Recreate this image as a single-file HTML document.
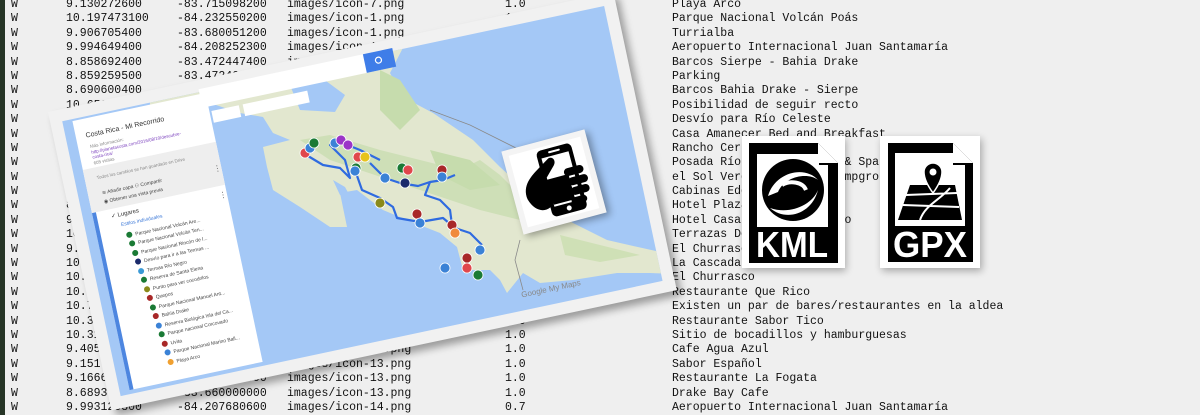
<!DOCTYPE html>
<html><head><meta charset="utf-8">
<style>
html,body{margin:0;padding:0;overflow:hidden;width:1200px;height:415px}
body{background:#efefef;position:relative;font-family:"Liberation Mono",monospace}
#strip{position:absolute;left:0;top:0;width:5px;height:415px;background:#263526}
#rows{position:absolute;left:0;top:-2px;width:1200px;font-size:11.5px;line-height:14.4px;color:#111}
.r{position:relative;height:14.4px}
.r span{position:absolute;top:0;white-space:pre}
svg{position:absolute;left:0;top:0}
</style></head><body>
<div id="strip"></div>
<div id="rows"><div class="r"><span style="left:11px">W</span><span style="left:66px">9.130272600</span><span style="left:177px">-83.715098200</span><span style="left:287px">images/icon-7.png</span><span style="left:505px">1.0</span><span style="left:672px">Playa Arco</span></div><div class="r"><span style="left:11px">W</span><span style="left:66px">10.197473100</span><span style="left:177px">-84.232550200</span><span style="left:287px">images/icon-1.png</span><span style="left:505px">1.0</span><span style="left:672px">Parque Nacional Volcán Poás</span></div><div class="r"><span style="left:11px">W</span><span style="left:66px">9.906705400</span><span style="left:177px">-83.680051200</span><span style="left:287px">images/icon-1.png</span><span style="left:505px">1.0</span><span style="left:672px">Turrialba</span></div><div class="r"><span style="left:11px">W</span><span style="left:66px">9.994649400</span><span style="left:177px">-84.208252300</span><span style="left:287px">images/icon-14.png</span><span style="left:505px">1.0</span><span style="left:672px">Aeropuerto Internacional Juan Santamaría</span></div><div class="r"><span style="left:11px">W</span><span style="left:66px">8.858692400</span><span style="left:177px">-83.472447400</span><span style="left:287px">images/icon-3.png</span><span style="left:505px">1.0</span><span style="left:672px">Barcos Sierpe - Bahia Drake</span></div><div class="r"><span style="left:11px">W</span><span style="left:66px">8.859259500</span><span style="left:177px">-83.472400000</span><span style="left:287px">images/icon-3.png</span><span style="left:505px">1.0</span><span style="left:672px">Parking</span></div><div class="r"><span style="left:11px">W</span><span style="left:66px">8.690600400</span><span style="left:177px">-83.650000000</span><span style="left:287px">images/icon-3.png</span><span style="left:505px">1.0</span><span style="left:672px">Barcos Bahia Drake - Sierpe</span></div><div class="r"><span style="left:11px">W</span><span style="left:66px">10.650000000</span><span style="left:177px">-85.400000000</span><span style="left:287px">images/icon-5.png</span><span style="left:505px">1.0</span><span style="left:672px">Posibilidad de seguir recto</span></div><div class="r"><span style="left:11px">W</span><span style="left:66px">10.700000000</span><span style="left:177px">-85.000000000</span><span style="left:287px">images/icon-5.png</span><span style="left:505px">1.0</span><span style="left:672px">Desvío para Río Celeste</span></div><div class="r"><span style="left:11px">W</span><span style="left:66px">10.600000000</span><span style="left:177px">-85.100000000</span><span style="left:287px">images/icon-9.png</span><span style="left:505px">1.0</span><span style="left:672px">Casa Amanecer Bed and Breakfast</span></div><div class="r"><span style="left:11px">W</span><span style="left:66px">10.760000000</span><span style="left:177px">-85.300000000</span><span style="left:287px">images/icon-9.png</span><span style="left:505px">1.0</span><span style="left:672px">Rancho Cerro Azul</span></div><div class="r"><span style="left:11px">W</span><span style="left:66px">10.680000000</span><span style="left:177px">-85.000000000</span><span style="left:287px">images/icon-9.png</span><span style="left:505px">1.0</span><span style="left:672px">Posada Río Celeste Hotel &amp; Spa</span></div><div class="r"><span style="left:11px">W</span><span style="left:66px">10.640000000</span><span style="left:177px">-85.100000000</span><span style="left:287px">images/icon-9.png</span><span style="left:505px">1.0</span><span style="left:672px">el Sol Verde Lodge and Campground</span></div><div class="r"><span style="left:11px">W</span><span style="left:66px">9.100000000</span><span style="left:177px">-83.600000000</span><span style="left:287px">images/icon-9.png</span><span style="left:505px">1.0</span><span style="left:672px">Cabinas Eddoes</span></div><div class="r"><span style="left:11px">W</span><span style="left:66px">8.800000000</span><span style="left:177px">-83.500000000</span><span style="left:287px">images/icon-9.png</span><span style="left:505px">1.0</span><span style="left:672px">Hotel Plaza</span></div><div class="r"><span style="left:11px">W</span><span style="left:66px">9.400000000</span><span style="left:177px">-83.600000000</span><span style="left:287px">images/icon-9.png</span><span style="left:505px">1.0</span><span style="left:672px">Hotel Casa Rural Corcovado</span></div><div class="r"><span style="left:11px">W</span><span style="left:66px">10.300000000</span><span style="left:177px">-84.800000000</span><span style="left:287px">images/icon-9.png</span><span style="left:505px">1.0</span><span style="left:672px">Terrazas De Dominical</span></div><div class="r"><span style="left:11px">W</span><span style="left:66px">9.900000000</span><span style="left:177px">-84.100000000</span><span style="left:287px">images/icon-13.png</span><span style="left:505px">1.0</span><span style="left:672px">El Churrasco Restaurante</span></div><div class="r"><span style="left:11px">W</span><span style="left:66px">10.100000000</span><span style="left:177px">-84.500000000</span><span style="left:287px">images/icon-13.png</span><span style="left:505px">1.0</span><span style="left:672px">La Cascada</span></div><div class="r"><span style="left:11px">W</span><span style="left:66px">10.100000000</span><span style="left:177px">-84.500000000</span><span style="left:287px">images/icon-13.png</span><span style="left:505px">1.0</span><span style="left:672px">El Churrasco</span></div><div class="r"><span style="left:11px">W</span><span style="left:66px">10.490000000</span><span style="left:177px">-84.700000000</span><span style="left:287px">images/icon-13.png</span><span style="left:505px">1.0</span><span style="left:672px">Restaurante Que Rico</span></div><div class="r"><span style="left:11px">W</span><span style="left:66px">10.720000000</span><span style="left:177px">-85.000000000</span><span style="left:287px">images/icon-13.png</span><span style="left:505px">1.0</span><span style="left:672px">Existen un par de bares/restaurantes en la aldea</span></div><div class="r"><span style="left:11px">W</span><span style="left:66px">10.315000000</span><span style="left:177px">-84.800000000</span><span style="left:287px">images/icon-13.png</span><span style="left:505px">1.0</span><span style="left:672px">Restaurante Sabor Tico</span></div><div class="r"><span style="left:11px">W</span><span style="left:66px">10.317000000</span><span style="left:177px">-84.800000000</span><span style="left:287px">images/icon-13.png</span><span style="left:505px">1.0</span><span style="left:672px">Sitio de bocadillos y hamburguesas</span></div><div class="r"><span style="left:11px">W</span><span style="left:66px">9.405250000</span><span style="left:177px">-84.100000000</span><span style="left:287px">images/icon-13.png</span><span style="left:505px">1.0</span><span style="left:672px">Cafe Agua Azul</span></div><div class="r"><span style="left:11px">W</span><span style="left:66px">9.151780000</span><span style="left:177px">-83.700000000</span><span style="left:287px">images/icon-13.png</span><span style="left:505px">1.0</span><span style="left:672px">Sabor Español</span></div><div class="r"><span style="left:11px">W</span><span style="left:66px">9.166619000</span><span style="left:177px">-83.700000000</span><span style="left:287px">images/icon-13.png</span><span style="left:505px">1.0</span><span style="left:672px">Restaurante La Fogata</span></div><div class="r"><span style="left:11px">W</span><span style="left:66px">8.689304000</span><span style="left:177px">-83.660000000</span><span style="left:287px">images/icon-13.png</span><span style="left:505px">1.0</span><span style="left:672px">Drake Bay Cafe</span></div><div class="r"><span style="left:11px">W</span><span style="left:66px">9.993125800</span><span style="left:177px">-84.207680600</span><span style="left:287px">images/icon-14.png</span><span style="left:505px">0.7</span><span style="left:672px">Aeropuerto Internacional Juan Santamaría</span></div></div>

<svg width="1200" height="415" viewBox="0 0 1200 415" font-family="Liberation Sans, sans-serif">
<defs>
<clipPath id="mapc"><rect transform="translate(48,112) rotate(-12)" x="12" y="12" width="554" height="281"/></clipPath>
<filter id="sh" x="-20%" y="-20%" width="140%" height="140%"><feGaussianBlur stdDeviation="4"/></filter>
</defs>
<g transform="translate(48,112) rotate(-12)">
<rect x="4" y="6" width="578" height="305" fill="#000" opacity="0.35" filter="url(#sh)"/>
<rect x="0" y="0" width="578" height="305" fill="#f1f1f1"/>
<rect x="12" y="12" width="554" height="281" fill="#a4c8f6"/>
</g>
<g clip-path="url(#mapc)">
<path d="M150,20 L420,20 L407,40 L390,73 L403,97 L433,113 L473,140 L500,167 L533,197 L573,223 L607,240 L660,252 L700,250 L700,275 L650,273 L617,273 L573,280 L540,283 L523,273 L507,293 L500,280 L490,270 L463,270 L457,247 L440,233 L407,220 L383,210 L357,190 L340,193 L347,227 L330,227 L300,207 L273,190 L267,167 L263,147 L290,140 L273,133 L263,117 L240,113 L210,103 L150,110 Z" fill="#e2e7cf"/>
<path d="M300,140 L330,135 L380,150 L420,160 L460,170 L480,160 L500,175 L520,195 L540,210 L520,220 L480,210 L450,200 L420,190 L390,180 L360,170 L330,160 Z" fill="#c9ddb0" opacity="0.8"/>
<path d="M380,70 L400,80 L420,110 L400,130 L380,110 Z" fill="#c6dcad"/>
<path d="M430,150 L470,160 L500,185 L470,190 L440,175 Z" fill="#c6dcad"/>
<path d="M560,235 L600,245 L640,255 L600,262 L565,255 Z" fill="#cfe0b6"/>
<path d="M290,85 L322,78 L345,95 L335,112 L300,110 Z" fill="#a4c8f6"/>
<path d="M333,180 L345,187 L352,200 L340,195 Z" fill="#a4c8f6"/>
<path d="M430,110 L470,125 L520,150" stroke="#8a8a8a" stroke-width="0.8" fill="none"/>
<path d="M520,240 L515,260 L523,290" stroke="#8a8a8a" stroke-width="0.8" fill="none"/>
<g fill="none" stroke="#2f6be0" stroke-width="2.2" stroke-linejoin="round">
<path d="M303,153 L323,165 L340,168 L350,178 L345,160 L330,145 L335,140 L360,150 L380,160"/>
<path d="M355,170 L362,190 L380,198 L393,207 L397,218 L420,222 L443,218 L455,228 L470,233 L482,245"/>
<path d="M370,163 L385,178 L400,183 L418,186 L430,182 L443,180 L455,175"/>
<path d="M430,182 L425,195 L440,200 L450,210 L452,225"/>
</g>
<g stroke="#fff" stroke-width="0.8">
<circle cx="305" cy="153" r="5" fill="#e0474c"/><circle cx="310" cy="148" r="5" fill="#3b82d6"/><circle cx="314" cy="143" r="5" fill="#1a7a35"/>
<circle cx="335" cy="143" r="5" fill="#3b82d6"/><circle cx="341" cy="140" r="5" fill="#9b35c7"/><circle cx="348" cy="145" r="5" fill="#9b35c7"/>
<circle cx="358" cy="157" r="5" fill="#e0474c"/><circle cx="365" cy="157" r="5" fill="#e6c31c"/><circle cx="356" cy="168" r="5" fill="#1a7a35"/><circle cx="355" cy="171" r="5" fill="#3b82d6"/>
<circle cx="385" cy="178" r="5" fill="#3b82d6"/><circle cx="402" cy="168" r="5" fill="#1a7a35"/><circle cx="408" cy="170" r="5" fill="#e0474c"/><circle cx="405" cy="183" r="5" fill="#1b2a6b"/>
<circle cx="442" cy="170" r="5" fill="#a82828"/><circle cx="442" cy="177" r="5" fill="#3b82d6"/><circle cx="380" cy="203" r="5" fill="#8a8a1a"/>
<circle cx="417" cy="214" r="5" fill="#a82828"/><circle cx="420" cy="223" r="5" fill="#3b82d6"/><circle cx="452" cy="225" r="5" fill="#a82828"/><circle cx="455" cy="233" r="5" fill="#f08a3c"/>
<circle cx="480" cy="250" r="5" fill="#3b82d6"/><circle cx="467" cy="258" r="5" fill="#a82828"/><circle cx="467" cy="268" r="5" fill="#e0474c"/><circle cx="445" cy="268" r="5" fill="#3b82d6"/><circle cx="478" cy="275" r="5" fill="#1a7a35"/>
</g>
</g>
<g transform="translate(48,112) rotate(-12)">
<rect x="152" y="9" width="190" height="19" fill="#fff"/>
<rect x="320" y="9" width="30" height="19" fill="#3f7de8"/>
<circle cx="334" cy="18" r="3" fill="none" stroke="#fff" stroke-width="1.2"/>
<rect x="160" y="33" width="28" height="12" fill="#fff"/>
<rect x="192" y="33" width="66" height="12" fill="#fff"/>
<text x="425" y="280" font-size="8" fill="#888">Google My Maps</text>
<rect x="22" y="14" width="136" height="275" fill="#fff"/>
<rect x="22" y="64" width="136" height="44" fill="#eeeeee"/>
<rect x="22" y="108" width="4" height="181" fill="#4d86e0"/>
<text x="32" y="33" font-size="7" fill="#333">Costa Rica - Mi Recorrido</text>
<text x="34" y="44" font-size="4.5" fill="#888">Más información:</text>
<text x="34" y="50" font-size="4.5" fill="#7a3fbd">http://planetacosta.com/2016/08/10/descubre-</text>
<text x="34" y="55" font-size="4.5" fill="#7a3fbd">costa-rica/</text>
<text x="34" y="61" font-size="4.5" fill="#888">605 visitas</text>
<text x="34" y="76" font-size="4.5" fill="#888">Todos los cambios se han guardado en Drive</text>
<text x="36" y="92" font-size="5" fill="#444">≋ Añadir capa   ⚇ Compartir</text>
<text x="36" y="101" font-size="5" fill="#444">◉ Obtener una vista previa</text>
<text x="150" y="93" font-size="8" fill="#666">⋮</text>
<text x="150" y="120" font-size="8" fill="#666">⋮</text>
<text x="40" y="117" font-size="6" fill="#333">✓ Lugares</text>
<text x="48" y="127" font-size="5" fill="#3b78d8">Estilos individuales</text>
<g font-size="5" fill="#444">
<circle cx="54" cy="137" r="3" fill="#1a7a35"/><text x="60" y="139">Parque Nacional Volcán Are...</text>
<circle cx="55" cy="146" r="3" fill="#1a7a35"/><text x="61" y="148">Parque Nacional Volcán Ten...</text>
<circle cx="56" cy="156" r="3" fill="#1a7a35"/><text x="62" y="158">Parque Nacional Rincón de l...</text>
<circle cx="57" cy="165" r="3" fill="#1b2a6b"/><text x="63" y="167">Desvío para ir a las Termas ...</text>
<circle cx="58" cy="175" r="3" fill="#3b9ad6"/><text x="64" y="177">Termas Río Negro</text>
<circle cx="59" cy="184" r="3" fill="#1a7a35"/><text x="65" y="186">Reserva de Santa Elena</text>
<circle cx="60" cy="194" r="3" fill="#8a8a1a"/><text x="66" y="196">Punto para ver cocodrilos</text>
<circle cx="61" cy="203" r="3" fill="#a82828"/><text x="67" y="205">Quepos</text>
<circle cx="62" cy="213" r="3" fill="#1a7a35"/><text x="68" y="215">Parque Nacional Manuel Ant...</text>
<circle cx="63" cy="222" r="3" fill="#a82828"/><text x="69" y="224">Bahía Drake</text>
<circle cx="64" cy="232" r="3" fill="#3b82d6"/><text x="70" y="234">Reserva Biológica Isla del Ca...</text>
<circle cx="65" cy="241" r="3" fill="#1a7a35"/><text x="71" y="243">Parque nacional Corcovado</text>
<circle cx="66" cy="251" r="3" fill="#a82828"/><text x="72" y="253">Uvita</text>
<circle cx="67" cy="260" r="3" fill="#3b82d6"/><text x="73" y="262">Parque Nacional Marino Ball...</text>
<circle cx="68" cy="270" r="3" fill="#f0a030"/><text x="74" y="272">Playa Arco</text>
</g>
</g>
<g transform="translate(554,182) rotate(-15)">
<rect x="-40" y="-40" width="86" height="86" fill="#000" opacity="0.35" filter="url(#sh)"/>
<rect x="-43" y="-43" width="86" height="86" fill="#f4f4f4"/>
<rect x="-37" y="-37" width="74" height="74" fill="#fff"/>
<rect x="-10" y="-34" width="36" height="68" rx="5" fill="#000"/>
<rect x="-6" y="-26" width="28" height="50" fill="#fff"/>
<circle cx="8" cy="29" r="2.5" fill="#fff"/>
<rect x="2" y="-31" width="12" height="2" rx="1" fill="#fff"/>
<path d="M-30,10 C-32,-5 -20,-12 -10,-18 L0,-24 C5,-26 8,-20 4,-16 L-6,-6 L-4,18 C-10,28 -25,28 -30,10 Z" fill="#000"/>
<rect x="12" y="-10" width="20" height="8" rx="4" fill="#000"/>
<rect x="14" y="0" width="20" height="8" rx="4" fill="#000"/>
<rect x="14" y="10" width="19" height="8" rx="4" fill="#000"/>
<rect x="12" y="20" width="16" height="7" rx="3.5" fill="#000"/>
<rect x="-6" y="-4" width="22" height="26" fill="#000"/>
</g>
<rect x="744" y="139" width="102" height="132" fill="#000" opacity="0.3" filter="url(#sh)"/>
<rect x="742" y="136" width="103" height="132" fill="#fff"/>
<path d="M749,143 H818 L838,163 V263 H749 Z" fill="#000"/>
<path d="M818,143 V163 H838 Z" fill="#fff"/>
<rect x="757" y="154" width="62" height="73" fill="#fff"/>
<rect x="819" y="165" width="9" height="62" fill="#fff"/>
<circle cx="793" cy="190" r="31" fill="#000"/>
<path d="M768,196 C775,172 805,165 818,180 C808,172 785,176 778,192 Z" fill="#fff"/>
<path d="M770,208 C790,215 812,205 818,190 C812,214 786,222 770,208 Z" fill="#fff"/>
<path d="M782,185 C790,180 803,182 806,190" stroke="#fff" stroke-width="4" fill="none"/>
<text x="756" y="257" font-size="36" font-weight="bold" fill="#fff" textLength="72" lengthAdjust="spacingAndGlyphs">KML</text>
<rect x="882" y="139" width="100" height="132" fill="#000" opacity="0.3" filter="url(#sh)"/>
<rect x="880" y="136" width="100" height="132" fill="#fff"/>
<path d="M888,143 H953 L973,163 V262 H888 Z" fill="#000"/>
<path d="M953,143 V163 H973 Z" fill="#fff"/>
<rect x="895" y="153" width="58" height="73" fill="#fff"/>
<rect x="953" y="165" width="12" height="61" fill="#fff"/>
<path d="M910,185 L955,185 L962,220 L898,220 Z" fill="#000"/>
<path d="M906,195 L957,193 M903,205 L959,207 M920,220 C925,205 940,200 950,188" stroke="#fff" stroke-width="2" fill="none"/>
<path d="M933,193 C925,182 924,176 924,172 A9,9 0 1 1 942,172 C942,176 941,182 933,193 Z" fill="#000" stroke="#fff" stroke-width="1.5"/>
<circle cx="933" cy="172" r="3.5" fill="#fff"/>
<text x="893" y="257" font-size="36" font-weight="bold" fill="#fff" textLength="74" lengthAdjust="spacingAndGlyphs">GPX</text>
</svg>
</body></html>
